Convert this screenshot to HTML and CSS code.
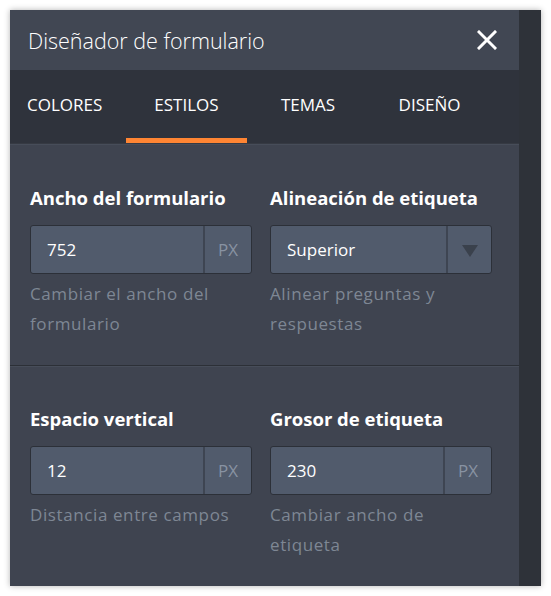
FILE: index.html
```html
<!DOCTYPE html>
<html lang="es">
<head>
    <meta charset="UTF-8">
    <meta name="viewport" content="width=device-width, initial-scale=1.0">
    <title>Diseñador de formulario</title>
    <link rel="stylesheet" href="styles.css">
</head>
<body>

    <div class="designer">
        <div class="designer-main">
            <div class="designer-header">
                <h2>Diseñador de formulario</h2>
                <button class="close-btn" type="button" aria-label="Cerrar">
                    <svg width="20" height="20" viewBox="0 0 20 20">
                        <path d="M2 2 L18 18 M18 2 L2 18" stroke="#fff" stroke-width="3" stroke-linecap="square"/>
                    </svg>
                </button>
            </div>

            <!-- Pestañas -->
            <div class="tabs">
                <div class="tab first">COLORES</div>
                <div class="tab active">ESTILOS</div>
                <div class="tab">TEMAS</div>
                <div class="tab">DISEÑO</div>
            </div>

            <div class="section">
                <div class="field">
                    <label for="ancho">Ancho del formulario</label>
                    <div class="input-group">
                        <input type="text" id="ancho" value="752">
                        <span class="addon">PX</span>
                    </div>
                    <p class="help">Cambiar el ancho del formulario</p>
                </div>
                <div class="field">
                    <label for="alineacion">Alineación de etiqueta</label>
                    <div class="input-group">
                        <div class="select-value" id="alineacion">Superior</div>
                        <span class="addon caret"><span class="triangle"></span></span>
                    </div>
                    <p class="help">Alinear preguntas y respuestas</p>
                </div>
            </div>

            <div class="section">
                <div class="field">
                    <label for="espacio">Espacio vertical</label>
                    <div class="input-group">
                        <input type="text" id="espacio" value="12">
                        <span class="addon">PX</span>
                    </div>
                    <p class="help">Distancia entre campos</p>
                </div>
                <div class="field">
                    <label for="grosor">Grosor de etiqueta</label>
                    <div class="input-group">
                        <input type="text" id="grosor" value="230">
                        <span class="addon">PX</span>
                    </div>
                    <p class="help">Cambiar ancho de etiqueta</p>
                </div>
            </div>
        </div>
        <div class="scroll-strip"></div>
    </div>

</body>
</html>
```

FILE: styles.css
```css
body {
    margin: 0;
    background-color: #fff;
    font-family: "Open Sans", "Noto Sans", sans-serif;
    color: white;
}
.designer {
    display: flex;
    width: 531px;
    margin: 10px;
    box-shadow: 0 0 6px rgba(0, 0, 0, 0.3);
}
.designer-main {
    width: 509px;
    background-color: #3f4450;
}
.scroll-strip {
    flex: 1;
    background-color: #2e3239;
}
.designer-header {
    display: flex;
    align-items: center;
    justify-content: space-between;
    height: 60px;
    padding: 0 22px 0 18px;
    background-color: #414753;
}
.designer-header h2 {
    margin: 0;
    font-size: 21.5px;
    font-weight: 300;
}
.close-btn {
    background: none;
    border: none;
    padding: 0;
    width: 20px;
    height: 20px;
    cursor: pointer;
}
.tabs {
    display: grid;
    grid-template-columns: 116px 121px 122px 121px;
    height: 73px;
    background-color: #2f333c;
    border-bottom: 1px solid #363a43;
}
.tab {
    display: flex;
    align-items: center;
    justify-content: center;
    font-size: 17px;
    border-bottom: 5px solid transparent;
}
.tab.first {
    justify-content: flex-start;
    padding-left: 17px;
}
.tab.active {
    border-bottom-color: #ff8533;
}
.section {
    display: grid;
    grid-template-columns: 222px 222px;
    column-gap: 18px;
    padding: 39px 27px 26px 20px;
    border-top: 1px solid #474d59;
}
.section + .section {
    border-top: 1px solid #2c3037;
    box-shadow: inset 0 1px 0 #474d59;
}
.field label {
    display: block;
    height: 28px;
    line-height: 28px;
    margin-bottom: 13px;
    font-size: 18.5px;
    font-weight: bold;
}
.input-group {
    display: flex;
    height: 47px;
    border: 1px solid #2c3038;
    border-radius: 3px;
    background-color: #515b6c;
    overflow: hidden;
}
.input-group input, .select-value {
    flex: 1;
    min-width: 0;
    border: none;
    background: transparent;
    color: white;
    font-family: inherit;
    font-size: 17px;
    padding: 0 0 0 16px;
    outline: none;
}
.select-value {
    display: flex;
    align-items: center;
}
.addon {
    display: flex;
    align-items: center;
    justify-content: center;
    width: 46px;
    border-left: 2px solid #3e4552;
    color: #8892a2;
    font-size: 17px;
}
.caret {
    width: 43px;
}
.triangle {
    width: 0;
    height: 0;
    border-left: 8px solid transparent;
    border-right: 8px solid transparent;
    border-top: 12px solid #3a414c;
    margin-top: 2px;
}
.help {
    margin: 5px 0 0;
    font-size: 17px;
    letter-spacing: 0.6px;
    line-height: 30px;
    color: #7e8794;
}
```
